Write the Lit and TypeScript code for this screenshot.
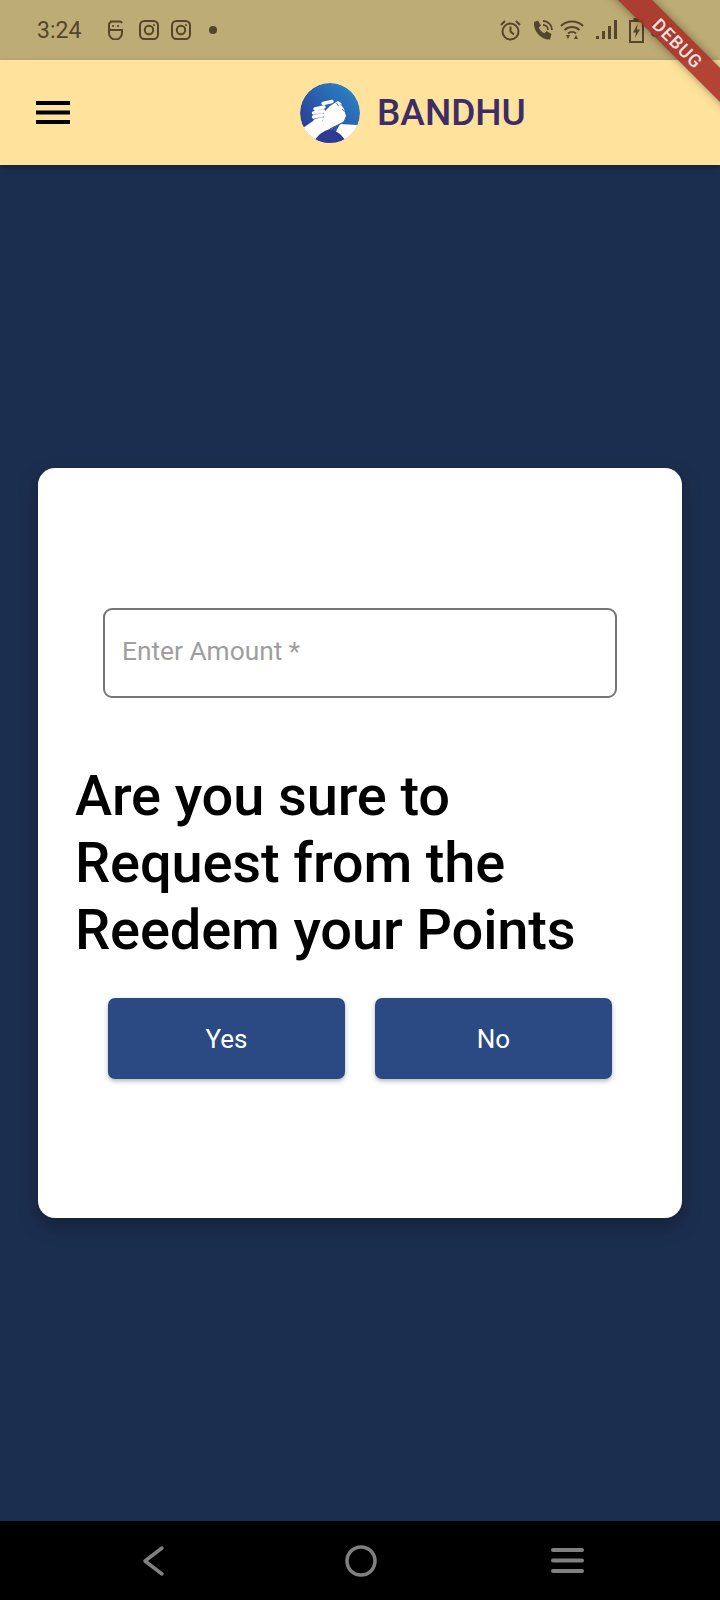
import {html, css, LitElement} from 'lit';
import {customElement} from 'lit/decorators.js';

@customElement('app-root')
export class AppRoot extends LitElement {
  static styles = css`
    :host {
      display: block;
      width: 720px;
      height: 1600px;
      font-family: Roboto, "Liberation Sans", sans-serif;
    }
    .page {
      position: relative;
      display: flex;
      flex-direction: column;
      width: 720px;
      height: 1600px;
      overflow: hidden;
      background: #1c2e4f;
    }
    .status {
      display: flex;
      align-items: center;
      height: 60px;
      padding: 0 0 0 37px;
      background: #bdac76;
      color: #55452a;
      box-sizing: border-box;
    }
    .time { font-size: 23px; width: 71px; }
    .status svg { display: block; flex: none; }
    .left-icons { display: flex; align-items: center; gap: 12px; }
    .right-icons {
      display: flex;
      align-items: center;
      margin-left: auto;
      margin-right: 44px;
    }
    .pct { font-size: 20px; margin-left: 6px; }
    .appbar {
      display: flex;
      align-items: center;
      height: 105px;
      padding-left: 36px;
      background: #ffe29c;
      box-shadow: 0 3px 6px rgba(0, 0, 0, .3);
      box-sizing: border-box;
      position: relative;
    }
    .burger { display: block; flex: none; }
    .brand {
      display: flex;
      align-items: center;
      gap: 17px;
      margin-left: 230px;
    }
    .brand-name {
      font-size: 37px;
      font-weight: 500;
      color: #3d2c66;
    }
    .main {
      flex: 1;
      display: flex;
      align-items: center;
      justify-content: center;
    }
    .card {
      width: 644px;
      height: 750px;
      padding: 140px 37px 0;
      box-sizing: border-box;
      background: #fff;
      border-radius: 17px;
      box-shadow: 0 8px 20px rgba(0, 0, 0, .3);
    }
    .field {
      display: flex;
      align-items: center;
      height: 90px;
      margin: 0 28px;
      padding: 0 17px 4px;
      box-sizing: border-box;
      border: 2px solid #757575;
      border-radius: 9px;
      font-size: 26.3px;
      color: #9e9e9e;
    }
    .question {
      margin: 65px 0 0;
      font-size: 56px;
      line-height: 67px;
      font-weight: 500;
      letter-spacing: -0.15px;
      color: #000;
    }
    .actions {
      display: flex;
      justify-content: center;
      gap: 30px;
      margin-top: 34px;
    }
    .btn {
      display: flex;
      align-items: center;
      justify-content: center;
      width: 237px;
      height: 81px;
      background: #2b4a83;
      color: #fff;
      font-size: 26px;
      border-radius: 7px;
      box-shadow: 0 2px 5px rgba(0, 0, 0, .3);
    }
    .nav {
      display: flex;
      align-items: center;
      height: 79px;
      background: #000;
      padding-left: 142px;
      box-sizing: border-box;
    }
    .nav svg { display: block; flex: none; }
    .nav .home { margin-left: 179px; }
    .nav .recents { margin-left: 174px; }
    .banner {
      position: absolute;
      top: 31px;
      right: -48px;
      width: 180px;
      height: 24px;
      display: flex;
      align-items: center;
      justify-content: center;
      background: rgba(170, 50, 42, .9);
      color: #f3e4e0;
      font-size: 18px;
      font-weight: 500;
      letter-spacing: 1px;
      transform: rotate(45deg);
      box-shadow: 0 0 8px rgba(0, 0, 0, .4);
    }
  `;

  private instagram() {
    return html`<svg width="20" height="20" viewBox="0 0 20 20" fill="none" stroke="#55452a" stroke-width="2">
      <rect x="1" y="1" width="18" height="18" rx="4.5"></rect>
      <circle cx="10" cy="10" r="4.2"></circle>
      <circle cx="15" cy="5" r="1" fill="#55452a" stroke="none"></circle>
    </svg>`;
  }

  render() {
    return html`
      <div class="page">
        <div class="status">
          <span class="time">3:24</span>
          <div class="left-icons">
            <svg style="margin-right:4px" width="15" height="20" viewBox="0 0 15 20" fill="none" stroke="#55452a" stroke-width="2">
              <path d="M2 1.500h10a2.500 2.500 0 0 1 2 1.500M1 9v4a6.500 6.500 0 0 0 13 0v-3H4a2.500 2.500 0 0 1-3-3V5a3 3 0 0 1 2-3"></path>
              <circle cx="5" cy="6" r="1.100" fill="#55452a" stroke="none"></circle>
              <circle cx="10" cy="6" r="1.100" fill="#55452a" stroke="none"></circle>
            </svg>
            ${this.instagram()}
            ${this.instagram()}
            <svg style="margin-left:6px" width="8" height="8" viewBox="0 0 8 8"><circle cx="4" cy="4" r="4" fill="#55452a"></circle></svg>
          </div>
          <div class="right-icons">
            <svg width="21" height="21" viewBox="0 0 21 21" fill="none" stroke="#55452a" stroke-width="2">
              <circle cx="10.500" cy="11.500" r="8"></circle>
              <path d="M10.500 6.500v5l3.500 3M1 5l4-4M20 5l-4-4"></path>
            </svg>
            <svg style="margin-left:12px" width="20" height="20" viewBox="0 0 20 20" fill="#55452a">
              <path d="M1 2l4-1.500 3 5-2.200 2a10 10 0 0 0 5.700 5.700l2-2.200 5 3-1.500 5.500C8 20 0 11 1 2z"></path>
              <path d="M10 1a9 9 0 0 1 9 9M10 5a5 5 0 0 1 5 5" fill="none" stroke="#55452a" stroke-width="1.800"></path>
            </svg>
            <svg style="margin-left:7px" width="24" height="20" viewBox="0 0 24 20" fill="none" stroke="#55452a" stroke-width="2">
              <path d="M1 6a16 16 0 0 1 22 0M4.500 10a11 11 0 0 1 15 0M8 13.500a6 6 0 0 1 8 0"></path>
              <path d="M6 15h4l-2 4zM14 19h4l-2-4z" fill="#55452a" stroke="none"></path>
            </svg>
            <svg style="margin-left:12px" width="22" height="20" viewBox="0 0 22 20" fill="#55452a">
              <rect x="0" y="16" width="3" height="3"></rect>
              <rect x="6" y="11" width="3" height="8"></rect>
              <rect x="12" y="6" width="3" height="13"></rect>
              <rect x="18" y="0" width="3" height="19"></rect>
            </svg>
            <svg style="margin-left:11px" width="15" height="25" viewBox="0 0 15 25">
              <rect x="1" y="3" width="13" height="21" fill="none" stroke="#55452a" stroke-width="2"></rect>
              <rect x="4.500" y="0" width="6" height="3" fill="#55452a"></rect>
              <path d="M8.500 6L4 14.500h3L6 20l5-8.500H8z" fill="#55452a"></path>
            </svg>
            <span class="pct">8%</span>
          </div>
        </div>
        <div class="appbar">
          <svg class="burger" width="34" height="23" viewBox="0 0 34 23" fill="#000">
            <rect y="0" width="34" height="4"></rect>
            <rect y="9.500" width="34" height="4"></rect>
            <rect y="19" width="34" height="4"></rect>
          </svg>
          <div class="brand">
            <svg width="60" height="60" viewBox="0 0 60 60">
              <defs>
                <linearGradient id="logo" x1="0" y1="1" x2="1" y2="0">
                  <stop offset="0" stop-color="#2a2f8c"></stop>
                  <stop offset="1" stop-color="#2a8ccb"></stop>
                </linearGradient>
                <clipPath id="disc"><circle cx="30" cy="30" r="30"></circle></clipPath>
              </defs>
              <g clip-path="url(#disc)">
                <circle cx="30" cy="30" r="30" fill="url(#logo)"></circle>
                <!-- back arm, lower right -->
                <path d="M40 41L57 42 60 60H30z" fill="#fff"></path>
                <!-- fist knuckles -->
                <g stroke="#fff" stroke-width="3.400" stroke-linecap="round">
                  <path d="M15 26l9-2M13.500 30l10-2M13.500 34l9-2M15 38l7-2"></path>
                  <path d="M23 20.500l9-2"></path>
                </g>
                <!-- front hand and arm -->
                <path d="M23 38L24 29 30 23 38 18 41 20 44 26 46 33 43 40 34 44 24 52 13 60H8L3 45 13 38z" fill="#fff"></path>
                <path d="M30 46L44 39" stroke="#2a5aa8" stroke-width="1.200"></path>
                <path d="M40.500 21l3 3.500M42 26l2.500 2.500M36.500 20l2 3" stroke="#2a5aa8" stroke-width="0.900"></path>
                <path d="M13 60Q20 48 30 46Q40 48 47 60z" fill="#2e3a94"></path>
              </g>
            </svg>
            <span class="brand-name">BANDHU</span>
          </div>
        </div>
        <div class="main">
          <div class="card">
            <div class="field">Enter Amount *</div>
            <p class="question">Are you sure to<br>Request from the<br>Reedem your Points</p>
            <div class="actions">
              <div class="btn">Yes</div>
              <div class="btn">No</div>
            </div>
          </div>
        </div>
        <div class="nav">
          <svg width="24" height="32" viewBox="0 0 24 32" fill="none" stroke="#808080" stroke-width="3.500" stroke-linecap="round" stroke-linejoin="round">
            <path d="M20 3L3 16l17 13"></path>
          </svg>
          <svg class="home" width="32" height="32" viewBox="0 0 32 32" fill="none" stroke="#808080" stroke-width="3.500">
            <circle cx="16" cy="16" r="14"></circle>
          </svg>
          <svg class="recents" width="33" height="26" viewBox="0 0 33 26" fill="#808080">
            <rect y="0" width="33" height="4" rx="2"></rect>
            <rect y="10.500" width="33" height="4" rx="2"></rect>
            <rect y="21" width="33" height="4" rx="2"></rect>
          </svg>
        </div>
        <div class="banner">DEBUG</div>
      </div>
    `;
  }
}
